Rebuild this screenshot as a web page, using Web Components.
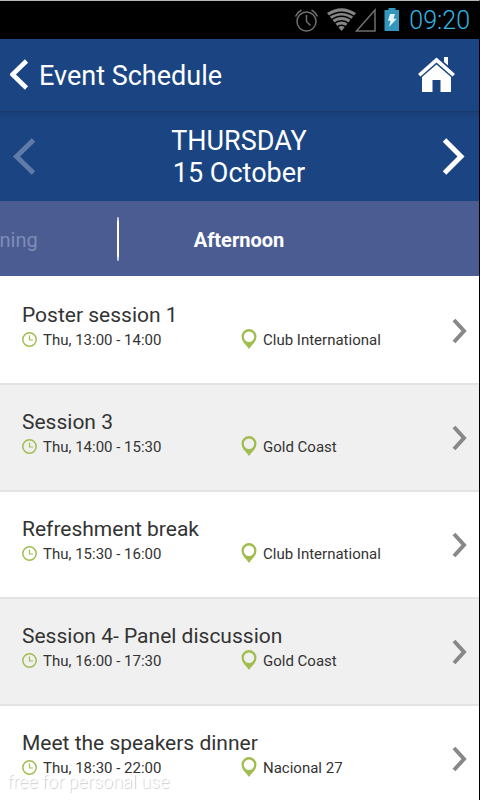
<!DOCTYPE html>
<html lang="en">
<head>
<meta charset="utf-8">
<meta name="viewport" content="width=device-width, initial-scale=1">
<title>Event Schedule</title>
<style>
html, body { height: 100%; margin: 0; }
body { font-family: Roboto, "Noto Sans", sans-serif; }
</style>
</head>
<body>
<schedule-app></schedule-app>
<script>
const define = (name, html, setup) => {
  const template = document.createElement('template');
  template.innerHTML = html;
  customElements.define(name, class extends HTMLElement {
    constructor() {
      super();
      this.attachShadow({ mode: 'open' }).append(template.content.cloneNode(true));
    }
    connectedCallback() { if (setup) setup(this, this.shadowRoot); }
  });
};

define('status-bar', `
<style>
:host { display: flex; align-items: center; justify-content: flex-end; box-sizing: border-box; height: 38px; flex: none; padding-right: 10px; background: #000; color: #33b5e5; font-size: 25px; line-height: 28px; font-weight: 300; }
svg { display: block; flex: none; }
.time { margin-left: 10px; padding-top: 2px; }
</style>
<svg width="106" height="26" viewBox="291 7 106 26" aria-hidden="true">
  <g fill="none" stroke="#6f6f6f" stroke-width="1.5">
    <circle cx="304.500" cy="21.500" r="9.500"/>
    <path d="M304.500 15v6.500l4 4M293.500 16.500q2-4.500 6-6.500M315.500 16.500q-2-4.500-6-6.500"/>
    <path d="M373 10v21h-18.500z"/>
  </g>
  <path d="M325 13Q339.500 3.500 354 13L339.500 31z" fill="#858585"/>
  <g fill="none" stroke="#000" stroke-width="1.400">
    <path d="M326 17Q339.500 7.500 353 17M328.500 20.500Q339.500 12 350.500 20.500M331.500 24Q339.500 17.500 347.500 24M334.500 27.500Q339.500 23 344.500 27.500"/>
  </g>
  <path d="M382.500 10h4v-2h7v2h4v21h-15z" fill="#3596bd"/>
  <path d="M388 14h5l-1.500 4.500 3 .5-7.500 8 1.500-6-2.500-.5z" fill="#e4f3f8"/>
</svg>
<span class="time">09:20</span>
`);

define('app-header', `
<style>
:host { display: flex; align-items: center; justify-content: space-between; box-sizing: border-box; height: 73px; flex: none; padding: 0 24px 0 10px; border-bottom: 1px solid #17396d; background: #1b4582; color: #fff; }
button { display: flex; align-items: center; margin: 0; padding: 0; border: 0; background: none; color: inherit; font: inherit; cursor: pointer; }
h1 { margin: 0 0 0 10px; padding-top: 2px; font-size: 27px; line-height: 32px; font-weight: 400; }
.left { display: flex; align-items: center; }
</style>
<div class="left">
  <button type="button" aria-label="Back">
    <svg width="19" height="32" viewBox="0 0 19 32"><path d="M16.500 2L2.500 15.500l14 13.500" fill="none" stroke="#fff" stroke-width="4.600"/></svg>
  </button>
  <h1><slot></slot></h1>
</div>
<button type="button" aria-label="Home">
  <svg width="37" height="36" viewBox="0 0 37 36" fill="#fff">
    <path d="M18.500 .5L0 17l2.500 2.500L18.500 5.500l16 14L37 17z"/>
    <path d="M26 0h4v8.500l-4-3.500z"/>
    <path d="M18.500 7.500L4 20v15h10.500V23h8v12H33V20z"/>
  </svg>
</button>
`);

define('day-switcher', `
<style>
:host { display: flex; align-items: center; justify-content: space-between; box-sizing: border-box; height: 89px; flex: none; padding: 0 13px 0 12px; background: linear-gradient(#1a3f78, #1b4582 8px); color: #fff; }
button { display: flex; margin: 0; padding: 0; border: 0; background: none; color: #fff; cursor: pointer; }
button:disabled { color: #5f7ba8; cursor: default; }
.date { padding-top: 1px; font-size: 27px; line-height: 32px; text-align: center; }
.date ::slotted(*) { display: block; }
</style>
<button type="button" disabled aria-label="Previous day"><svg width="24" height="40" viewBox="0 0 24 40"><path d="M21.500 3L4.500 19.500l17 16.500" fill="none" stroke="currentColor" stroke-width="5"/></svg></button>
<div class="date"><slot></slot></div>
<button type="button" aria-label="Next day"><svg width="24" height="40" viewBox="0 0 24 40"><path d="M2.500 3L19 19.500 2.500 36" fill="none" stroke="currentColor" stroke-width="5"/></svg></button>
`);

define('period-tabs', `
<style>
:host { display: grid; grid-template-columns: minmax(0, 1fr) minmax(0, 2fr) minmax(0, 1fr); align-items: center; box-sizing: border-box; height: 75px; flex: none; overflow: hidden; background: #4b5c92; font-size: 20px; line-height: 28px; }
button { margin: 0; padding: 0; border: 0; background: none; font: inherit; white-space: nowrap; cursor: pointer; }
.previous { justify-self: end; margin-right: 82px; padding-top: 2px; color: #7f8db5; }
.current { height: 44px; padding-top: 2px; color: #fff; font-weight: 700; border-left: 2px solid; border-image: linear-gradient(#8f9bbd, #fff 6px, #fff 38px, #8f9bbd) 1; margin-left: -3px; }
</style>
<button type="button" class="previous">Morning</button>
<button type="button" class="current" aria-current="true">Afternoon</button>
`);

define('session-row', `
<style>
:host { display: flex; align-items: center; box-sizing: border-box; height: 107px; padding: 0 12px 0 22px; border-bottom: 2px solid #e3e3e3; background: var(--row-background, #fff); color: #333; }
.info { flex: 1; min-width: 0; padding-bottom: 10px; }
h2 { margin: 0; font-size: 21px; line-height: 28px; font-weight: 400; }
.details { display: grid; grid-template-columns: 219px 1fr; align-items: center; font-size: 15px; line-height: 22px; }
.details span { display: flex; align-items: center; gap: 6px; }
svg { display: block; flex: none; }
button { margin: 0; padding: 0; border: 0; background: none; color: #888; cursor: pointer; }
</style>
<div class="info">
  <h2><slot></slot></h2>
  <div class="details">
    <span>
      <svg width="15" height="15" viewBox="0 0 15 15" fill="none" stroke="#a1bd50"><circle cx="7.500" cy="7.500" r="6.700" stroke-width="1.500"/><path d="M7.500 3.500v4.500h3.500" stroke-width="1.200"/></svg>
      <slot name="time"></slot>
    </span>
    <span>
      <svg width="16" height="22" viewBox="0 0 16 22"><path fill="#a1bd50" fill-rule="evenodd" d="M8 20Q6 17 3 14Q.5 11 .5 7.500a7.500 7.500 0 0 1 15 0Q15.500 11 13 14Q10 17 8 20zM8 2.500a5.200 5.200 0 1 0 0 10.400a5.200 5.200 0 0 0 0-10.400z"/></svg>
      <slot name="place"></slot>
    </span>
  </div>
</div>
<button type="button" aria-label="Open session"><svg width="16" height="26" viewBox="0 0 16 26"><path d="M3 2L13 13 3 24" fill="none" stroke="currentColor" stroke-width="4"/></svg></button>
`);

define('session-list', `
<style>
:host { display: block; flex: 1; min-height: 0; box-sizing: border-box; padding-top: 2px; overflow-y: auto; scrollbar-width: none; background: #fff; }
session-row:nth-of-type(even) { --row-background: #f0f0f0; }
</style>
`, (host, root) => {
  const sessions = [
    ['Poster session 1', 'Thu, 13:00 - 14:00', 'Club International'],
    ['Session 3', 'Thu, 14:00 - 15:30', 'Gold Coast'],
    ['Refreshment break', 'Thu, 15:30 - 16:00', 'Club International'],
    ['Session 4- Panel discussion', 'Thu, 16:00 - 17:30', 'Gold Coast'],
    ['Meet the speakers dinner', 'Thu, 18:30 - 22:00', 'Nacional 27']
  ];
  for (const [title, time, place] of sessions) {
    const row = document.createElement('session-row');
    row.append(title);
    for (const [name, text] of [['time', time], ['place', place]]) {
      const part = document.createElement('span');
      part.slot = name;
      part.textContent = text;
      row.append(part);
    }
    root.append(row);
  }
});

define('schedule-app', `
<style>
:host { position: relative; display: flex; flex-direction: column; box-sizing: border-box; height: 100vh; border-top: 1px solid #b4b8b6; border-right: 1px solid #000; }
status-bar { margin-right: -1px; }
.notice { position: absolute; left: 7px; bottom: 6px; margin: 0; color: #fff; font-size: 18px; line-height: 24px; font-weight: 300; text-shadow: 1px 1px 1px #ccc; pointer-events: none; }
</style>
<status-bar></status-bar>
<app-header>Event Schedule</app-header>
<day-switcher><span>THURSDAY</span><span>15 October</span></day-switcher>
<period-tabs></period-tabs>
<session-list></session-list>
<p class="notice">free for personal use</p>
`);
</script>
</body>
</html>
